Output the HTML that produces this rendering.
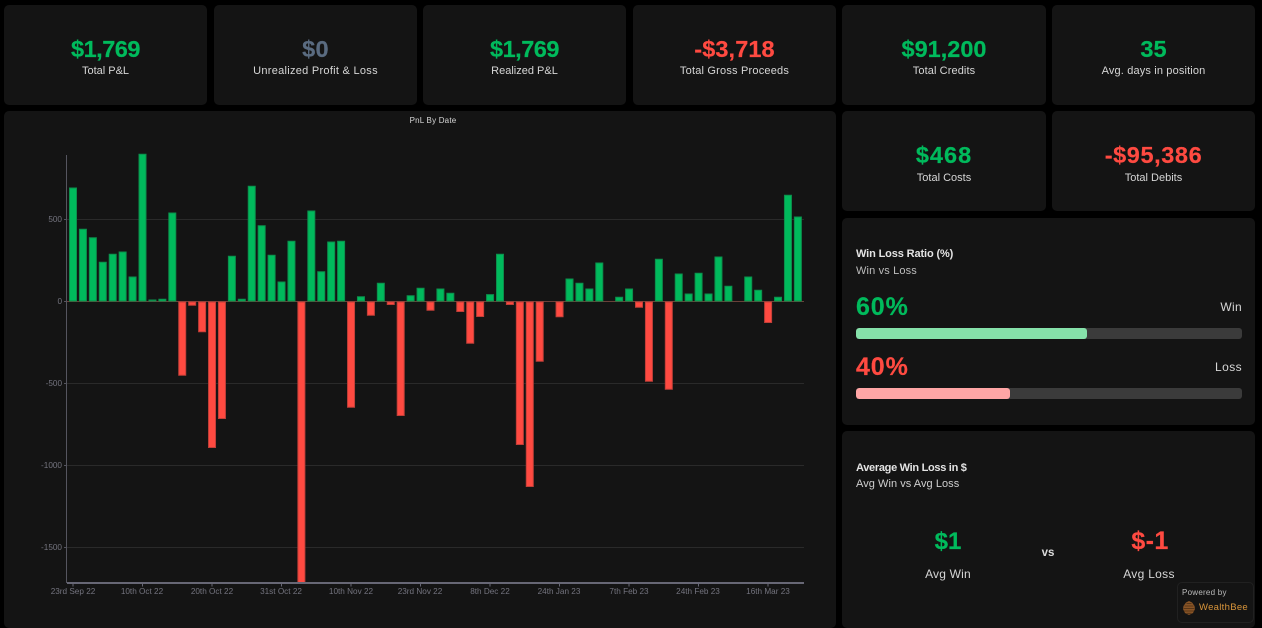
<!DOCTYPE html>
<html><head><meta charset="utf-8">
<style>
html,body{margin:0;padding:0;background:#000;width:1262px;height:628px;overflow:hidden;font-family:"Liberation Sans",sans-serif}
#w{position:absolute;left:0;top:0;width:1262px;height:628px;overflow:hidden}
.c{position:absolute;background:#141414;border-radius:5px}
.k{width:203px;height:100px;text-align:center}
.k b{position:absolute;left:0;right:0;top:31px;line-height:26px;font-size:23.5px;font-weight:700;-webkit-text-stroke:.2px currentColor}
.k span{position:absolute;left:0;right:0;top:60px;line-height:13px;font-size:11px;letter-spacing:.2px;color:#d6d6d6}
.g{color:#00ba5c}.r{color:#ff4a41}.s{color:#5a6b80}
.t{position:absolute;white-space:nowrap}
.bar{position:absolute;left:14px;width:386px;height:11px;background:#3b3b3b;border-radius:3px;overflow:hidden}
.bar i{display:block;height:11px;border-radius:3px}
svg text{font-family:"Liberation Sans",sans-serif}
</style></head><body><div id="w">
<div class="c k" style="left:4px;top:5px"><b class="g" style="letter-spacing:-.5px">$1,769</b><span style="letter-spacing:0">Total P&amp;L</span></div>
<div class="c k" style="left:214px;top:5px"><b class="s" style="letter-spacing:.3px">$0</b><span style="letter-spacing:.28px">Unrealized Profit &amp; Loss</span></div>
<div class="c k" style="left:423px;top:5px"><b class="g" style="letter-spacing:-.5px">$1,769</b><span style="letter-spacing:0">Realized P&amp;L</span></div>
<div class="c k" style="left:633px;top:5px"><b class="r" style="letter-spacing:.1px">-$3,718</b><span>Total Gross Proceeds</span></div>
<div class="c k" style="left:842px;top:5px;width:204px"><b class="g">$91,200</b><span style="letter-spacing:.1px">Total Credits</span></div>
<div class="c k" style="left:1052px;top:5px"><b class="g">35</b><span style="letter-spacing:.15px">Avg. days in position</span></div>
<div class="c k" style="left:842px;top:111px;width:204px"><b class="g" style="letter-spacing:1px">$468</b><span style="top:61px;letter-spacing:0">Total Costs</span></div>
<div class="c k" style="left:1052px;top:111px"><b class="r" style="letter-spacing:.6px">-$95,386</b><span style="top:61px;letter-spacing:0">Total Debits</span></div>

<div class="c" style="left:4px;top:111px;width:832px;height:517px"></div>
<svg style="position:absolute;left:0;top:0" width="840" height="628" viewBox="0 0 840 628">
<text x="433" y="123" font-size="8" text-anchor="middle" fill="#d8d8d8" letter-spacing=".2">PnL By Date</text>
<g stroke="#2a2a2a" stroke-width="1">
<path d="M67 219.5H804M67 383.5H804M67 465.5H804M67 547.5H804"/>
</g>
<g fill="#74747f" font-size="8.2" text-anchor="end">
<text x="62" y="222">500</text><text x="62" y="304">0</text><text x="62" y="386">-500</text><text x="62" y="468">-1000</text><text x="62" y="550">-1500</text>
</g>
<path d="M66 301.5H804" stroke="#6a4038" stroke-width="1"/>
<g transform="translate(.5 0)">
<path fill="#00ba5c" stroke="#0c8f4c" stroke-width="1" d="M69 188h7V301h-7zM78.93 229.3h7V301h-7zM88.86 237.7h7V301h-7zM98.79 262.3h7V301h-7zM108.72 254.3h7V301h-7zM118.65 252h7V301h-7zM128.58 277h7V301h-7zM138.51 154.3h7V301h-7zM148.44 300h7V301h-7zM158.37 299.3h7V301h-7zM168.3 213h7V301h-7zM227.88 256.3h7V301h-7zM237.81 299.3h7V301h-7zM247.74 186.3h7V301h-7zM257.67 225.7h7V301h-7zM267.6 255.3h7V301h-7zM277.53 282h7V301h-7zM287.46 241.3h7V301h-7zM307.32 211h7V301h-7zM317.25 271.7h7V301h-7zM327.18 242h7V301h-7zM337.11 241.3h7V301h-7zM356.97 296.7h7V301h-7zM376.83 283.3h7V301h-7zM406.62 295.7h7V301h-7zM416.55 288.3h7V301h-7zM436.41 289h7V301h-7zM446.34 293.3h7V301h-7zM486.06 294.6h7V301h-7zM495.99 254.3h7V301h-7zM565.5 279h7V301h-7zM575.43 283.3h7V301h-7zM585.36 289h7V301h-7zM595.29 263h7V301h-7zM615.15 297.3h7V301h-7zM625.08 289h7V301h-7zM654.87 259.3h7V301h-7zM674.73 274h7V301h-7zM684.66 294h7V301h-7zM694.59 273.3h7V301h-7zM704.52 294h7V301h-7zM714.45 257h7V301h-7zM724.38 286.3h7V301h-7zM744.24 277h7V301h-7zM754.17 290.3h7V301h-7zM774.03 297.3h7V301h-7zM783.96 195.3h7V301h-7zM793.89 217h7V301h-7z"/>
<path fill="#ff4a41" stroke="#c23f38" stroke-width="1" d="M178.23 302h7V375.2h-7zM188.16 302h7V305.2h-7zM198.09 302h7V331.8h-7zM208.02 302h7V447.5h-7zM217.95 302h7V418.5h-7zM297.39 302h7V583h-7zM347.04 302h7V407.2h-7zM366.9 302h7V315.2h-7zM386.76 302h7V304.5h-7zM396.69 302h7V415.5h-7zM426.48 302h7V310.2h-7zM456.27 302h7V311.5h-7zM466.2 302h7V343.2h-7zM476.13 302h7V316.5h-7zM505.92 302h7V304.5h-7zM515.85 302h7V444.5h-7zM525.78 302h7V486.5h-7zM535.71 302h7V361.2h-7zM555.57 302h7V316.8h-7zM635.01 302h7V307.2h-7zM644.94 302h7V381.2h-7zM664.8 302h7V389.2h-7zM764.1 302h7V322.5h-7z"/>
</g>
<path d="M66.5 155V583" stroke="#55555f" stroke-width="1"/>
<path d="M64 219.5h2M64 301.5h2M64 383.5h2M64 465.5h2M64 547.5h2" stroke="#55555f" stroke-width="1"/>
<path d="M67 583H804" stroke="#676775" stroke-width="2"/>
<path d="M73 584v2.500M142.500 584v2.500M212 584v2.500M281.500 584v2.500M351 584v2.500M420.500 584v2.500M490 584v2.500M559.500 584v2.500M629 584v2.500M698.500 584v2.500M768 584v2.500" stroke="#676775" stroke-width="1"/>
<g fill="#74747f" font-size="8.2" text-anchor="middle">
<text x="73" y="594">23rd Sep 22</text><text x="142" y="594">10th Oct 22</text><text x="212" y="594">20th Oct 22</text><text x="281" y="594">31st Oct 22</text><text x="351" y="594">10th Nov 22</text><text x="420" y="594">23rd Nov 22</text><text x="490" y="594">8th Dec 22</text><text x="559" y="594">24th Jan 23</text><text x="629" y="594">7th Feb 23</text><text x="698" y="594">24th Feb 23</text><text x="768" y="594">16th Mar 23</text>
</g>
</svg>

<div class="c" style="left:842px;top:218px;width:413px;height:207px">
<div class="t" style="left:14px;top:30px;font-size:11px;line-height:13px;font-weight:700;color:#e4e4e4;letter-spacing:-.13px">Win Loss Ratio (%)</div>
<div class="t" style="left:14px;top:47px;font-size:11px;line-height:13px;color:#bdbdbd;letter-spacing:.15px">Win vs Loss</div>
<div class="t g" style="left:14px;top:76px;font-size:25px;line-height:26px;font-weight:700;letter-spacing:.9px;-webkit-text-stroke:.2px currentColor">60%</div>
<div class="t" style="right:13px;top:82px;font-size:12px;line-height:14px;color:#d6d6d6;letter-spacing:.3px">Win</div>
<div class="bar" style="top:110px"><i style="width:231px;background:#86e1aa"></i></div>
<div class="t r" style="left:14px;top:136px;font-size:25px;line-height:26px;font-weight:700;letter-spacing:.9px;-webkit-text-stroke:.2px currentColor">40%</div>
<div class="t" style="right:13px;top:142px;font-size:12px;line-height:14px;color:#d6d6d6;letter-spacing:.4px">Loss</div>
<div class="bar" style="top:170px"><i style="width:154px;background:#ffa5a5"></i></div>
</div>

<div class="c" style="left:842px;top:431px;width:413px;height:197px">
<div class="t" style="left:14px;top:31px;font-size:11px;line-height:13px;font-weight:700;color:#e4e4e4;letter-spacing:-.3px">Average Win Loss in $</div>
<div class="t" style="left:14px;top:47px;font-size:11px;line-height:13px;color:#cfcfcf;letter-spacing:.05px">Avg Win vs Avg Loss</div>
<div class="t g" style="left:56px;width:100px;text-align:center;top:97px;font-size:24px;line-height:27px;font-weight:700;-webkit-text-stroke:.2px currentColor">$1</div>
<div class="t" style="left:56px;width:100px;text-align:center;top:136px;font-size:12px;line-height:14px;color:#d6d6d6;letter-spacing:.2px">Avg Win</div>
<div class="t" style="left:186px;width:40px;text-align:center;top:115px;font-size:11.5px;line-height:14px;font-weight:700;color:#dcdcdc">vs</div>
<div class="t r" style="left:258px;width:100px;text-align:center;top:97px;font-size:25px;line-height:27px;font-weight:700;letter-spacing:.4px;-webkit-text-stroke:.2px currentColor">$-1</div>
<div class="t" style="left:257px;width:100px;text-align:center;top:136px;font-size:12px;line-height:14px;color:#d6d6d6;letter-spacing:.3px">Avg Loss</div>
</div>

<div style="position:absolute;left:1177px;top:582px;width:75px;height:39px;background:#141414;border:1px solid #212121;border-radius:5px">
<div class="t" style="left:4px;top:4px;font-size:8px;line-height:11px;color:#bbb;letter-spacing:.25px">Powered by</div>
<svg style="position:absolute;left:4px;top:17px" width="14" height="16" viewBox="0 0 14 16">
<path d="M7 1L10 2.500L12.500 6L13 9L11 13L7 15L3 13L1 9L1.500 6L4 2.500Z" fill="#8a5526"/>
<path d="M4.500 3.500H9.500M2.500 6H11.500M1.500 8.500H12.500M2 11H12M4.500 13.300H9.500" stroke="#4a2e14" stroke-width=".8"/>
</svg>
<div class="t" style="left:21px;top:19px;font-size:9.500px;line-height:12px;color:#d9953a;letter-spacing:.3px">WealthBee</div>
</div>
</div></body></html>
